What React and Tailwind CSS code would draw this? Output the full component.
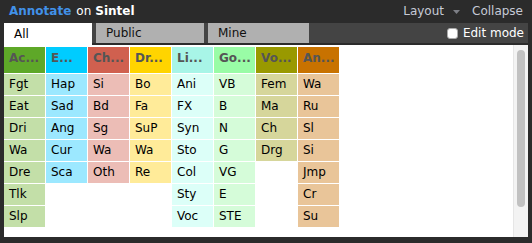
const columns = [
  { name: "Ac...", head: "bg-[#5ea828]", cell: "bg-[#c3dfa8]", items: ["Fgt", "Eat", "Dri", "Wa", "Dre", "Tlk", "Slp"] },
  { name: "E...", head: "bg-[#00ccff]", cell: "bg-[#9ce8ff]", items: ["Hap", "Sad", "Ang", "Cur", "Sca"] },
  { name: "Ch...", head: "bg-[#d0604f]", cell: "bg-[#ecbdb6]", items: ["Si", "Bd", "Sg", "Wa", "Oth"] },
  { name: "Dr...", head: "bg-[#ffd400]", cell: "bg-[#ffeb99]", items: ["Bo", "Fa", "SuP", "Wa", "Re"] },
  { name: "Li...", head: "bg-[#a8f5e7]", cell: "bg-[#dcfff8]", items: ["Ani", "FX", "Syn", "Sto", "Col", "Sty", "Voc"] },
  { name: "Go...", head: "bg-[#99fca6]", cell: "bg-[#d5fcd9]", items: ["VB", "B", "N", "G", "VG", "E", "STE"] },
  { name: "Vo...", head: "bg-[#999900]", cell: "bg-[#d6d69b]", items: ["Fem", "Ma", "Ch", "Drg"] },
  { name: "An...", head: "bg-[#c87200]", cell: "bg-[#e9c599]", items: ["Wa", "Ru", "Sl", "Si", "Jmp", "Cr", "Su"] },
];

const Tab = ({ label, active, width }) => (
  <div
    className={`${width} flex items-center pl-[10px] ${
      active ? "h-[22px] bg-white text-black" : "h-[20px] bg-[#b0b0b0] text-[#111]"
    }`}
  >
    {label}
  </div>
);

const App = () => {
  return (
    <div
      className="flex h-[243px] w-[532px] flex-col overflow-hidden bg-[#2b2b2b] text-[12px] leading-[15px]"
      style={{ fontFamily: '"DejaVu Sans", Verdana, sans-serif' }}
    >
      {/* top bar */}
      <div className="flex h-[23px] items-center pl-[9px] pr-[9px] pb-[1px]">
        <span className="font-bold text-[#4191e8]">Annotate</span>
        <span className="ml-[5px] text-white">on</span>
        <span className="ml-[4px] font-bold text-white">Sintel</span>
        <div className="ml-auto flex items-center text-[#c6cad6]">
          <span>Layout</span>
          <svg className="ml-[9px] mt-[2px]" width="7" height="4" viewBox="0 0 7 4">
            <path d="M0 0 L7 0 L3.5 4 Z" fill="#7d7f86" />
          </svg>
          <span className="ml-[12px]">Collapse</span>
        </div>
      </div>

      {/* tabs */}
      <div className="mx-[4px] flex h-[22px] items-start">
        <div className="flex h-[20px] flex-1 items-start gap-[4px] bg-[#444444]">
          <Tab label="All" active width="w-[88px]" />
          <Tab label="Public" width="w-[108px]" />
          <Tab label="Mine" width="w-[101px]" />
          <label className="ml-auto flex h-[20px] items-center pr-[4px] text-white">
            <span className="mr-[5px] h-[11px] w-[11px] rounded-[3px] border border-[#aaa] bg-white" />
            Edit mode
          </label>
        </div>
      </div>

      {/* content */}
      <div className="mx-[4px] flex h-[192px] bg-white">
        <div className="flex flex-1 items-start gap-[1px] pt-[2px]">
          {columns.map((col) => (
            <div key={col.name} className="flex w-[41px] flex-col gap-[1px]">
              <div className={`h-[26px] pl-[5px] pt-[4px] font-bold text-[#555] ${col.head}`}>
                {col.name}
              </div>
              {col.items.map((item, i) => (
                <div key={i} className={`flex h-[21px] items-center pl-[5px] text-black ${col.cell}`}>
                  {item}
                </div>
              ))}
            </div>
          ))}
        </div>
        <div className="flex w-[15px] justify-center border-l border-[#e6e6e6] bg-[#f3f3f3] pt-[5px]">
          <div className="h-[157px] w-[8px] rounded-full bg-[#c1c1c1]" />
        </div>
      </div>
    </div>
  );
};

export default App;
